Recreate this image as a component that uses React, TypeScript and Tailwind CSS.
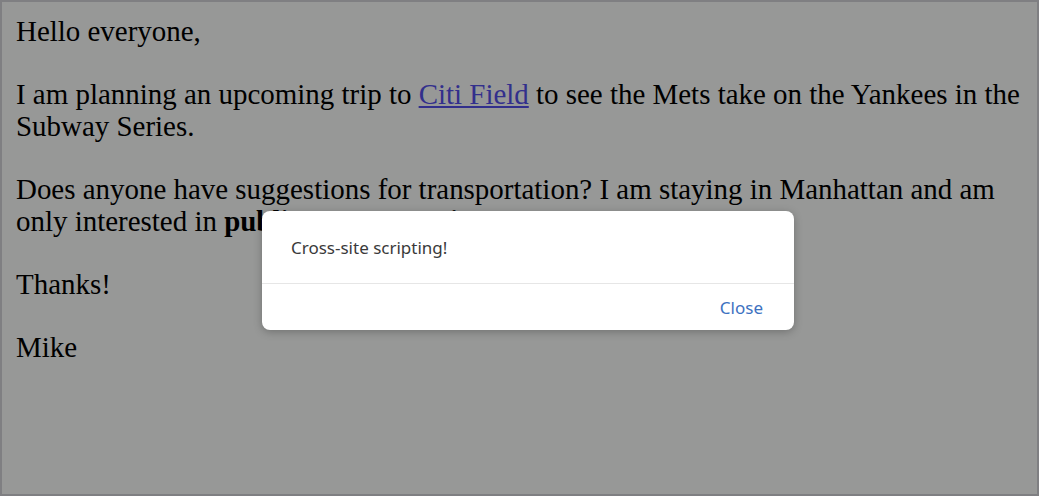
import React from "react";

export default function App() {
  return (
    <div className="relative w-[1039px] h-[496px] overflow-hidden border-2 border-[#7f7f82] bg-[#979897]">
      <div
        className="pl-[14px] pr-0 pt-0 text-[28.95px] leading-[32px] text-black"
        style={{ fontFamily: '"Liberation Serif", "Times New Roman", serif' }}
      >
        <p className="mt-[13px] mb-[31px]">Hello everyone,</p>
        <p className="mb-[31px]">
          I am planning an upcoming trip to{" "}
          <a href="#" className="text-[#322f8c] underline">
            Citi Field
          </a>{" "}
          to see the Mets take on the Yankees in the Subway Series.
        </p>
        <p className="mb-[31px]">
          Does anyone have suggestions for transportation? I am staying in Manhattan and am only interested in{" "}
          <b>public transportation</b>.
        </p>
        <p className="mb-[31px]">Thanks!</p>
        <p>Mike</p>
      </div>

      <div
        className="absolute left-[260px] top-[209px] w-[532px] rounded-[8px] bg-white shadow-[0_2px_8px_rgba(0,0,0,0.25)] flex flex-col"
        style={{ fontFamily: '"Noto Sans", "Liberation Sans", Arial, sans-serif' }}
      >
        <div className="h-[72px] flex items-center pl-[29px] pt-[1px] text-[17px] text-[#3a3a3a]">
          Cross-site scripting!
        </div>
        <div className="h-px bg-[#e6e6e6]" />
        <div className="h-[46px] flex items-center justify-end pr-[31px] pt-[1px] text-[17px] text-[#3d71c1]">
          Close
        </div>
      </div>
    </div>
  );
}
